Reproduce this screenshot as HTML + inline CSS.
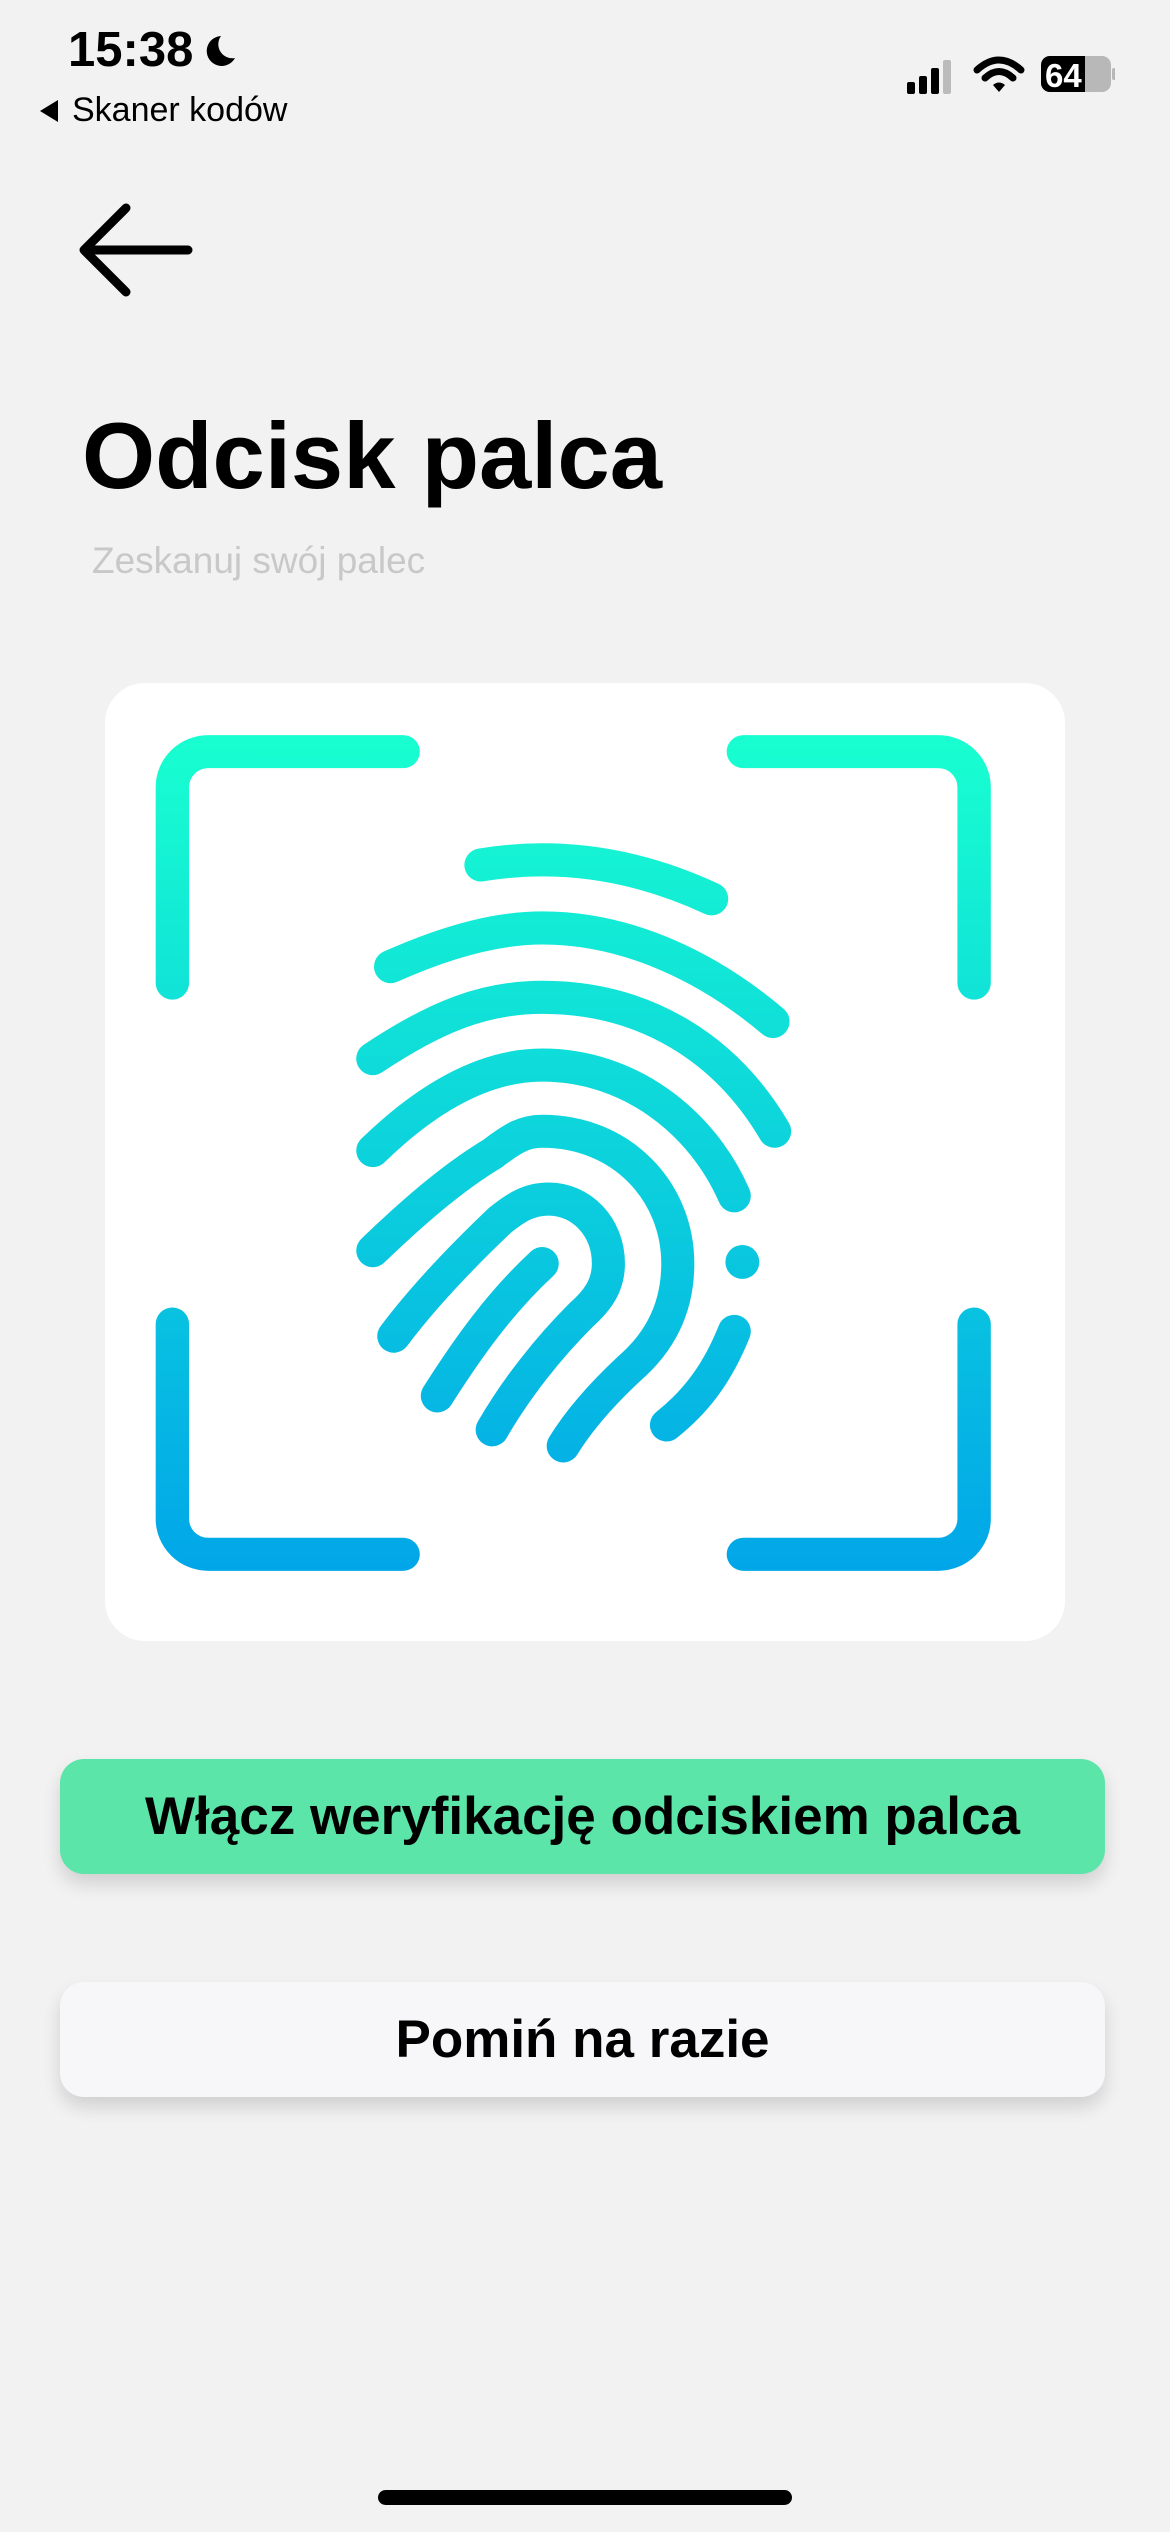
<!DOCTYPE html>
<html><head><meta charset="utf-8"><style>
html,body{margin:0;padding:0}
body{width:1170px;height:2532px;background:#f2f2f2;position:relative;overflow:hidden;font-family:"Liberation Sans",sans-serif;color:#000}
.abs{position:absolute}
.time{left:68px;top:22px;font-size:49px;font-weight:bold}
.sk{left:72px;top:91px;font-size:34px}
.title{left:82px;top:402px;font-size:94px;font-weight:bold}
.sub{left:92px;top:540px;font-size:37px;color:#c8c8c8}
.card{left:105px;top:683px;width:960px;height:958px;background:#fff;border-radius:40px}
.btn{left:60px;width:1045px;height:115px;border-radius:24px;display:flex;align-items:center;justify-content:center;font-weight:bold;box-shadow:0 10px 18px rgba(0,0,0,0.14)}
.b1{top:1759px;background:#5ce5a8;font-size:53px}
.b2{top:1982px;background:#f7f7f9;font-size:53px}
.home{left:378px;top:2490px;width:414px;height:15px;border-radius:8px;background:#000}
</style></head><body>
<div class="abs time">15:38 <svg width="38" height="38" viewBox="0 0 38 38" style="vertical-align:-4px;margin-left:-6px"><path d="M20 4 A15 15 0 1 0 34 26 A14 14 0 0 1 20 4Z" fill="#000"/></svg></div>
<svg class="abs" style="left:36px;top:98px" width="26" height="26" viewBox="0 0 26 26"><path d="M22 2 V24 L4 13Z" fill="#000"/></svg>
<div class="abs sk">Skaner kodów</div>
<svg class="abs" style="left:905px;top:52px" width="210" height="46" viewBox="0 0 210 46">
<rect x="2" y="30" width="8" height="12" rx="2" fill="#000"/>
<rect x="14" y="24" width="8" height="18" rx="2" fill="#000"/>
<rect x="26" y="16" width="8" height="26" rx="2" fill="#000"/>
<rect x="38" y="8" width="8" height="34" rx="2" fill="#bbb"/>
<path d="M72 18 Q94 -2 116 18" stroke="#000" stroke-width="7" fill="none" stroke-linecap="round"/>
<path d="M80 26 Q94 13 108 26" stroke="#000" stroke-width="7" fill="none" stroke-linecap="round"/>
<path d="M88 33 L94 40 L100 33 Q94 28 88 33Z" fill="#000"/>
<rect x="136" y="4" width="70" height="36" rx="9" fill="#b8b8b8"/>
<path d="M145 4 H180 V40 H145 A9 9 0 0 1 136 31 V13 A9 9 0 0 1 145 4Z" fill="#000"/>
<rect x="207" y="16" width="4" height="12" rx="2" fill="#b8b8b8"/>
<text x="140" y="35" font-family="Liberation Sans" font-weight="bold" font-size="33" fill="#fff">64</text>
</svg>
<svg class="abs" style="left:72px;top:198px" width="124" height="106" viewBox="0 0 124 106">
<path d="M114 50 H12 M52 8 L10 50 L52 92" stroke="#000" stroke-width="9" fill="none" stroke-linecap="round" stroke-linejoin="round" transform="translate(2,2)"/>
</svg>
<div class="abs title">Odcisk palca</div>
<div class="abs sub">Zeskanuj swój palec</div>
<div class="abs card"></div>
<svg class="abs" style="left:100px;top:680px" width="970" height="960" viewBox="0 0 1568 1568" preserveAspectRatio="none">
<defs><linearGradient id="g" gradientUnits="userSpaceOnUse" x1="0" y1="90" x2="0" y2="1455"><stop offset="0" stop-color="#18ffd0"/><stop offset="1" stop-color="#01a6e8"/></linearGradient></defs>
<g stroke="url(#g)" stroke-width="54" fill="none" stroke-linecap="round" stroke-linejoin="round">
<path d="M117 495 V175 A58 58 0 0 1 175 117 H490"/>
<path d="M1040 117 H1355 A58 58 0 0 1 1413 175 V495"/>
<path d="M117 1052 V1370 A58 58 0 0 0 175 1428 H490"/>
<path d="M1040 1428 H1355 A58 58 0 0 0 1413 1370 V1052"/>
</g>
</svg>
<svg class="abs" style="left:0;top:0" width="1170" height="2532" viewBox="0 0 725 1569">
<defs><linearGradient id="g2" gradientUnits="userSpaceOnUse" x1="0" y1="455" x2="0" y2="972"><stop offset="0" stop-color="#18ffd0"/><stop offset="1" stop-color="#01a6e8"/></linearGradient></defs>
<g stroke="url(#g2)" stroke-width="20.5" fill="none" stroke-linecap="round" stroke-linejoin="round">
<path d="M298 536 Q370 524 441 557"/>
<path d="M242 599 C280 582 310 575 336 575 C390 575 440 600 479 633"/>
<path d="M231 656 C270 630 300 618 336 618 C400 618 450 650 480 701"/>
<path d="M231 713 C265 680 300 660 336 660 C390 660 435 695 455 741"/>
<path d="M231 775 C255 752 280 730 305 715 C318 705 325 701 336 701 C385 701 420 738 420 783 C420 815 405 835 390 848 C375 862 360 878 349 896"/>
<path d="M244 828 C265 800 290 775 310 756 C320 748 328 743 340 743 C360 743 377 760 377 783 C377 797 370 806 360 815 C340 835 320 860 305 886"/>
<path d="M336 783 C310 807 290 835 271 865"/>
<path d="M455 825 C445 850 432 868 413 883"/>
</g>
<circle cx="460" cy="782" r="10.5" fill="url(#g2)"/>
</svg>
<div class="abs btn b1">Włącz weryfikację odciskiem palca</div>
<div class="abs btn b2">Pomiń na razie</div>
<div class="abs home"></div>
</body></html>
